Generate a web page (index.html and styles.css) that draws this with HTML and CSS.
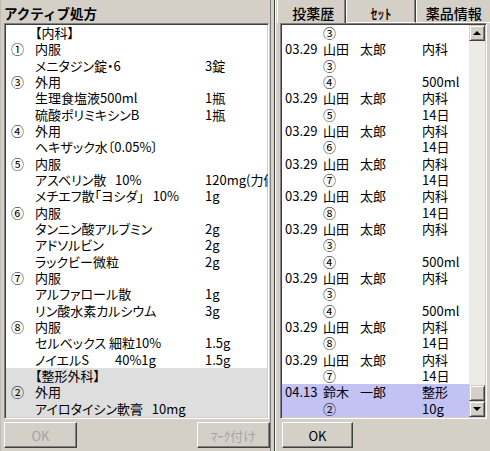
FILE: index.html
```html
<!DOCTYPE html>
<html lang="ja">
<head>
<meta charset="utf-8">
<title>アクティブ処方</title>
<link rel="stylesheet" href="styles.css">
</head>
<body>
<div class="app">
  <section class="left">
    <div class="title">アクティブ処方</div>
    <div class="listbox">
      <div class="row"><span class="no"></span><span class="name">【内科】</span><span class="qty"></span></div>
      <div class="row"><span class="no">①</span><span class="name">内服</span><span class="qty"></span></div>
      <div class="row"><span class="no"></span><span class="name">メニタジン錠・6</span><span class="qty">3錠</span></div>
      <div class="row"><span class="no">③</span><span class="name">外用</span><span class="qty"></span></div>
      <div class="row"><span class="no"></span><span class="name">生理食塩液500ml</span><span class="qty">1瓶</span></div>
      <div class="row"><span class="no"></span><span class="name">硫酸ポリミキシンB</span><span class="qty">1瓶</span></div>
      <div class="row"><span class="no">④</span><span class="name">外用</span><span class="qty"></span></div>
      <div class="row"><span class="no"></span><span class="name">ヘキザック水〔0.05%〕</span><span class="qty"></span></div>
      <div class="row"><span class="no">⑤</span><span class="name">内服</span><span class="qty"></span></div>
      <div class="row"><span class="no"></span><span class="name">アスベリン散   10%</span><span class="qty">120mg(力価)</span></div>
      <div class="row"><span class="no"></span><span class="name">メチエフ散「ヨシダ」   10%</span><span class="qty">1g</span></div>
      <div class="row"><span class="no">⑥</span><span class="name">内服</span><span class="qty"></span></div>
      <div class="row"><span class="no"></span><span class="name">タンニン酸アルブミン</span><span class="qty">2g</span></div>
      <div class="row"><span class="no"></span><span class="name">アドソルビン</span><span class="qty">2g</span></div>
      <div class="row"><span class="no"></span><span class="name">ラックビー微粒</span><span class="qty">2g</span></div>
      <div class="row"><span class="no">⑦</span><span class="name">内服</span><span class="qty"></span></div>
      <div class="row"><span class="no"></span><span class="name">アルファロール散</span><span class="qty">1g</span></div>
      <div class="row"><span class="no"></span><span class="name">リン酸水素カルシウム</span><span class="qty">3g</span></div>
      <div class="row"><span class="no">⑧</span><span class="name">内服</span><span class="qty"></span></div>
      <div class="row"><span class="no"></span><span class="name">セルベックス 細粒10%</span><span class="qty">1.5g</span></div>
      <div class="row"><span class="no"></span><span class="name">ノイエルS　　40%1g</span><span class="qty">1.5g</span></div>
      <div class="row group"><span class="no"></span><span class="name">【整形外科】</span><span class="qty"></span></div>
      <div class="row group"><span class="no">②</span><span class="name">外用</span><span class="qty"></span></div>
      <div class="row group"><span class="no"></span><span class="name">アイロタイシン軟膏   10mg</span><span class="qty"></span></div>
    </div>
    <div class="buttons">
      <button class="btn disabled">OK</button>
      <button class="btn disabled">ﾏｰｸ付け</button>
    </div>
  </section>
  <div class="splitter"></div>
  <section class="right">
    <div class="tabs">
      <div class="tab active">投薬歴</div>
      <div class="tab">ｾｯﾄ</div>
      <div class="tab">薬品情報</div>
    </div>
    <div class="tabpanel">
      <div class="histbox">
        <div class="hrows">
          <div class="hrow"><span></span><span>③</span><span></span><span></span></div>
          <div class="hrow"><span>03.29</span><span>山田</span><span>太郎</span><span>内科</span></div>
          <div class="hrow"><span></span><span>③</span><span></span><span></span></div>
          <div class="hrow"><span></span><span>④</span><span></span><span>500ml</span></div>
          <div class="hrow"><span>03.29</span><span>山田</span><span>太郎</span><span>内科</span></div>
          <div class="hrow"><span></span><span>⑤</span><span></span><span>14日</span></div>
          <div class="hrow"><span>03.29</span><span>山田</span><span>太郎</span><span>内科</span></div>
          <div class="hrow"><span></span><span>⑥</span><span></span><span>14日</span></div>
          <div class="hrow"><span>03.29</span><span>山田</span><span>太郎</span><span>内科</span></div>
          <div class="hrow"><span></span><span>⑦</span><span></span><span>14日</span></div>
          <div class="hrow"><span>03.29</span><span>山田</span><span>太郎</span><span>内科</span></div>
          <div class="hrow"><span></span><span>⑧</span><span></span><span>14日</span></div>
          <div class="hrow"><span>03.29</span><span>山田</span><span>太郎</span><span>内科</span></div>
          <div class="hrow"><span></span><span>③</span><span></span><span></span></div>
          <div class="hrow"><span></span><span>④</span><span></span><span>500ml</span></div>
          <div class="hrow"><span>03.29</span><span>山田</span><span>太郎</span><span>内科</span></div>
          <div class="hrow"><span></span><span>③</span><span></span><span></span></div>
          <div class="hrow"><span></span><span>④</span><span></span><span>500ml</span></div>
          <div class="hrow"><span>03.29</span><span>山田</span><span>太郎</span><span>内科</span></div>
          <div class="hrow"><span></span><span>⑧</span><span></span><span>14日</span></div>
          <div class="hrow"><span>03.29</span><span>山田</span><span>太郎</span><span>内科</span></div>
          <div class="hrow"><span></span><span>⑦</span><span></span><span>14日</span></div>
          <div class="hrow selected"><span>04.13</span><span>鈴木</span><span>一郎</span><span>整形</span></div>
          <div class="hrow selected"><span></span><span>②</span><span></span><span>10g</span></div>
        </div>
        <div class="scrollbar">
          <div class="sbtn up"><span class="arrow-up"></span></div>
          <div class="track"></div>
          <div class="thumb"></div>
          <div class="sbtn down"><span class="arrow-down"></span></div>
        </div>
      </div>
      <div class="buttons rbuttons">
        <button class="btn">OK</button>
      </div>
    </div>
  </section>
</div>
</body>
</html>
```
FILE: styles.css
```css
* { box-sizing: border-box; }
html, body { margin: 0; padding: 0; }
body {
  width: 490px;
  height: 451px;
  overflow: hidden;
  background: #d4d0c8;
  font-family: "Noto Sans CJK JP", "Noto Sans", sans-serif;
  font-size: 13px;
  color: #000;
}
.app { display: flex; height: 451px; }

/* left panel */
.left {
  width: 270px;
  display: flex;
  flex-direction: column;
  border-left: 1px solid #c0bcb4;
}
.title {
  height: 23px;
  padding: 2px 0 0 3px;
  font-weight: bold;
  font-size: 13.5px;
  line-height: 22px;
}
.listbox {
  margin-left: 3px;
  width: 265px;
  height: 396px;
  background: #fff;
  border: 1px solid;
  border-color: #808080 #fff #fff #808080;
  box-shadow: inset 1px 1px 0 #404040, inset -1px -1px 0 #d4d0c8;
  padding: 1px;
  overflow: hidden;
}
.row {
  display: grid;
  grid-template-columns: 29px 170px minmax(0, 1fr);
  height: 16.33px;
  line-height: 16.33px;
  white-space: pre;
  font-feature-settings: "palt";
}
.row .no { padding-left: 5px; font-feature-settings: normal; }
.row.group { background: #dedede; }

.buttons {
  height: 32px;
  display: flex;
  justify-content: space-between;
  align-items: flex-start;
  padding: 3px 0 0 3px;
}
.btn {
  width: 73px;
  height: 26px;
  padding: 0;
  background: #d4d0c8;
  border: 1px solid;
  border-color: #fff #404040 #404040 #fff;
  box-shadow: inset -1px -1px 0 #808080;
  font-family: "Noto Sans CJK JP", sans-serif;
  font-size: 13px;
  color: #000;
}
.btn.disabled { color: #a4a4a4; }

/* splitter */
.splitter {
  width: 5px;
  border-left: 1px solid #808080;
  border-right: 1px solid #404040;
}

/* right panel */
.right {
  width: 215px;
  border-left: 1px solid #fff;
  display: flex;
  flex-direction: column;
}
.tabs {
  height: 23px;
  display: flex;
  padding-left: 1px;
}
.tab {
  width: 71px;
  height: 23px;
  border-left: 1px solid #fff;
  border-right: 1px solid #404040;
  border-bottom: 1px solid #fff;
  box-shadow: inset -1px 0 0 #808080;
  text-align: center;
  padding-top: 4px;
  line-height: 18px;
  font-size: 14px;
  font-weight: 500;
  white-space: nowrap;
}
.tab.active { width: 69px; border-bottom: none; padding-left: 4px; }
.tab:last-child { width: 74px; border-right: none; box-shadow: none; }

.tabpanel {
  flex: 1;
  padding-left: 4px;
  display: flex;
  flex-direction: column;
}
.histbox {
  width: 207px;
  height: 396px;
  background: #fff;
  border: 1px solid;
  border-color: #808080 #fff #fff #808080;
  box-shadow: inset 1px 1px 0 #404040, inset -1px -1px 0 #d4d0c8;
  padding: 1px;
  display: flex;
  overflow: hidden;
}
.hrows { width: 187px; }
.hrow {
  display: grid;
  grid-template-columns: 41px 37px 62px minmax(0, 1fr);
  height: 16.33px;
  line-height: 16.33px;
  white-space: nowrap;
}
.hrow span:first-child { padding-left: 3px; }
.hrow.selected { background: #c2c2f4; }

.scrollbar {
  width: 16px;
  display: flex;
  flex-direction: column;
  background: #edebe6;
}
.sbtn {
  height: 16px;
  background: #d4d0c8;
  border: 1px solid;
  border-color: #d4d0c8 #404040 #404040 #d4d0c8;
  box-shadow: inset 1px 1px 0 #fff, inset -1px -1px 0 #808080;
  display: flex;
  align-items: center;
  justify-content: center;
}
.track { flex: 1; }
.thumb {
  height: 16px;
  background: #d4d0c8;
  border: 1px solid;
  border-color: #d4d0c8 #404040 #404040 #d4d0c8;
  box-shadow: inset 1px 1px 0 #fff, inset -1px -1px 0 #808080;
}
.arrow-up, .arrow-down {
  width: 0;
  height: 0;
  border-left: 4px solid transparent;
  border-right: 4px solid transparent;
}
.arrow-up { border-bottom: 4px solid #000; }
.arrow-down { border-top: 4px solid #000; }

.rbuttons { padding-left: 2px; }
.rbuttons .btn { width: 71px; }
```
